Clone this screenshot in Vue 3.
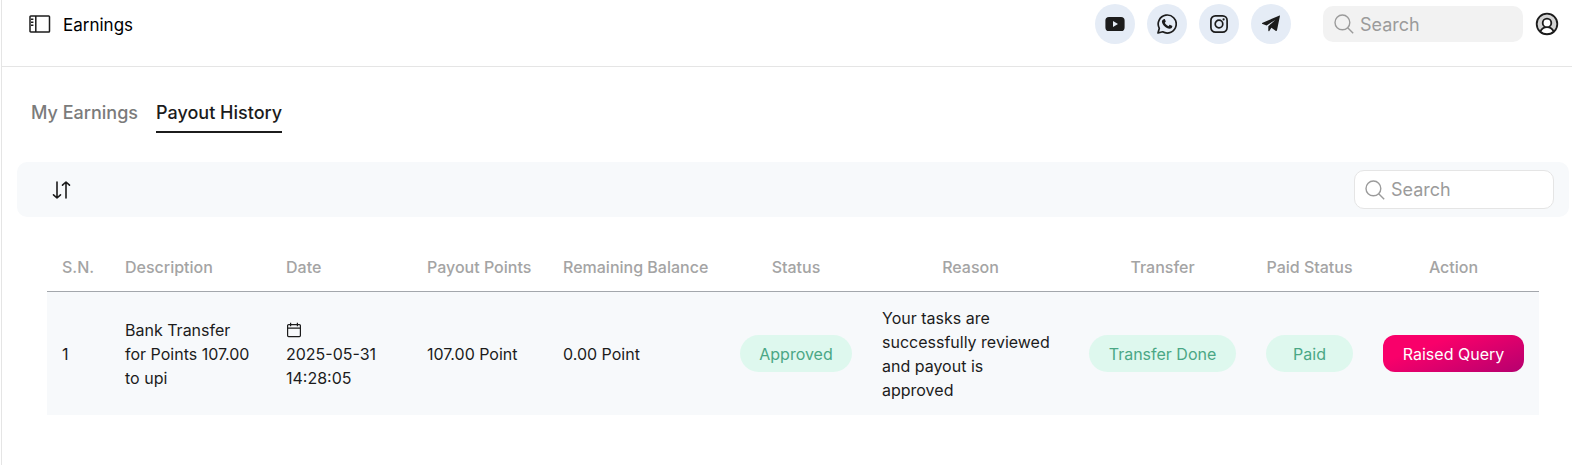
<script setup>
import { ref } from 'vue'

const tabs = ['My Earnings', 'Payout History']
const activeTab = ref('Payout History')

const columns = [
  { key: 'sn', label: 'S.N.' },
  { key: 'description', label: 'Description' },
  { key: 'date', label: 'Date' },
  { key: 'points', label: 'Payout Points' },
  { key: 'balance', label: 'Remaining Balance' },
  { key: 'status', label: 'Status', center: true },
  { key: 'reason', label: 'Reason', center: true },
  { key: 'transfer', label: 'Transfer', center: true },
  { key: 'paid', label: 'Paid Status', center: true },
  { key: 'action', label: 'Action', center: true },
]

const payouts = [
  {
    sn: 1,
    description: 'Bank Transfer for Points 107.00 to upi',
    date: '2025-05-31 14:28:05',
    points: '107.00 Point',
    balance: '0.00 Point',
    status: 'Approved',
    reason: 'Your tasks are successfully reviewed and payout is approved',
    transfer: 'Transfer Done',
    paid: 'Paid',
  },
]
</script>

<template>
  <div class="page">
    <header class="topbar">
      <button class="icon-button" type="button" aria-label="Toggle sidebar">
        <svg width="22" height="18" viewBox="0 0 22 18" fill="none" stroke="#1c1c1c" stroke-width="1.5">
          <rect x="1" y="1" width="19.5" height="16" rx="0.8" />
          <path d="M6.8 1v16M2 4.2h2.4M2 7.200h2.400M2 10.200h2.400" />
        </svg>
      </button>
      <h1 class="title">Earnings</h1>
      <nav class="socials" aria-label="Social links">
        <a class="social" href="#" aria-label="YouTube">
          <svg width="20" height="20" viewBox="0 0 20 20">
            <path fill="#1c1c1c" fill-rule="evenodd" d="M4 3h12q3.6 0 3.6 3.6v6.8q0 3.6-3.6 3.6H4q-3.600 0-3.600-3.600V6.600Q.4 3 4 3zm4 4v6l5-3z" />
          </svg>
        </a>
        <a class="social" href="#" aria-label="WhatsApp">
          <svg width="20" height="20" viewBox="0 0 20 20">
            <path fill="none" stroke="#1c1c1c" stroke-width="1.7" stroke-linejoin="round" d="M1 19l1.300-4.700A9 9 0 1 1 5.700 17.800z" />
            <path fill="#1c1c1c" d="M6.700 5.200c.4-.3 1-.3 1.200.1l.8 1.900c.1.300 0 .6-.2.8l-.7.800c.9 1.700 2.100 2.700 3.700 3.400l.9-1.100c.2-.3.5-.3.800-.2l1.800.9c.3.200.4.400.3.800-.2 1.400-1.400 2.200-2.700 2.200-3.500-.2-7.500-3.900-7.700-7.200 0-1 .7-1.900 1.800-2.400z" />
          </svg>
        </a>
        <a class="social" href="#" aria-label="Instagram">
          <svg width="20" height="20" viewBox="0 0 20 20" fill="none" stroke="#1c1c1c" stroke-width="1.700">
            <rect x="1.900" y="1.900" width="16.200" height="16.200" rx="4.500" />
            <circle cx="10" cy="10" r="3.800" />
            <circle cx="14.600" cy="5.400" r="1.100" fill="#1c1c1c" stroke="none" />
          </svg>
        </a>
        <a class="social" href="#" aria-label="Telegram">
          <svg width="20" height="20" viewBox="0 0 20 20">
            <path fill="#1c1c1c" d="M18.900 2.200 16 16.300c-.2.800-.8.900-1.400.5l-4.200-3.100-2.100 3.200c-.4.500-1 .3-1-.4v-4.300l6.900-6.300-8.600 5.500L1.600 10c-.9-.3-.9-.8.100-1.200L18 1.700c.7-.3 1 0 .9.500z" />
          </svg>
        </a>
      </nav>
      <label class="search">
        <svg width="20" height="20" viewBox="0 0 20 20" fill="none" stroke="#9b9b9b" stroke-width="1.400">
          <circle cx="8.400" cy="8.400" r="7.400" />
          <path d="m13.700 13.700 5.500 5.500" />
        </svg>
        <input type="search" placeholder="Search" aria-label="Search site" />
      </label>
      <button class="icon-button" type="button" aria-label="Account">
        <svg width="24" height="24" viewBox="0 0 24 24" fill="none" stroke="#1c1c1c" stroke-width="1.800">
          <circle cx="12" cy="12" r="10.300" fill="#d4d4d4" />
          <path fill="#fff" d="M5.300 19.600c1.300-2.800 3.700-4.400 6.700-4.400s5.400 1.600 6.700 4.400A10.300 10.300 0 0 1 5.300 19.600z" />
          <circle cx="12" cy="10.900" r="4.300" fill="#fff" />
        </svg>
      </button>
    </header>

    <main>
      <div class="tabs" role="tablist">
        <button
          v-for="tab in tabs"
          :key="tab"
          type="button"
          role="tab"
          class="tab"
          :class="{ active: tab === activeTab }"
          :aria-selected="tab === activeTab"
          @click="activeTab = tab"
        >{{ tab }}</button>
      </div>

      <div class="toolbar">
        <button class="icon-button" type="button" aria-label="Sort">
          <svg width="20" height="20" viewBox="0 0 20 20" fill="none" stroke="#1c1c1c" stroke-width="1.600" stroke-linecap="round" stroke-linejoin="round">
            <path d="M6 2v16M2.500 14.800 6 18l3.500-3.200M15 18V2M11.500 5.200 15 2l3.500 3.200" />
          </svg>
        </button>
        <label class="search boxed">
          <svg width="20" height="20" viewBox="0 0 20 20" fill="none" stroke="#9b9b9b" stroke-width="1.400">
            <circle cx="8.400" cy="8.400" r="7.400" />
            <path d="m13.700 13.700 5.500 5.500" />
          </svg>
          <input type="search" placeholder="Search" aria-label="Search payouts" />
        </label>
      </div>

      <div class="table-wrap">
        <table>
          <colgroup>
            <col v-for="c in columns" :key="c.key" :class="'col-' + c.key" />
          </colgroup>
          <thead>
            <tr>
              <th v-for="c in columns" :key="c.key" scope="col" :class="{ center: c.center }">{{ c.label }}</th>
            </tr>
          </thead>
          <tbody>
            <tr v-for="p in payouts" :key="p.sn">
              <td>{{ p.sn }}</td>
              <td class="description">{{ p.description }}</td>
              <td>
                <svg class="calendar" width="16" height="16" viewBox="0 0 16 16" fill="none" stroke="#1c1c1c" stroke-width="1.200">
                  <rect x="1.600" y="2.600" width="12.800" height="12" rx="1" />
                  <path d="M1.600 6.200h12.800M4.600.8v3.400M11.400.8v3.400" />
                </svg>
                {{ p.date }}
              </td>
              <td>{{ p.points }}</td>
              <td>{{ p.balance }}</td>
              <td class="center"><span class="pill">{{ p.status }}</span></td>
              <td>{{ p.reason }}</td>
              <td class="center"><span class="pill">{{ p.transfer }}</span></td>
              <td class="center"><span class="pill">{{ p.paid }}</span></td>
              <td class="center"><button class="query" type="button">Raised Query</button></td>
            </tr>
          </tbody>
        </table>
      </div>
    </main>
  </div>
</template>

<style>
body {
  background: #fff;
}
</style>

<style scoped>
.page {
  box-sizing: border-box;
  min-height: 100vh;
  margin-left: 1px;
  border-left: 1px solid #e5e5e5;
  font-family: Inter, "Liberation Sans", sans-serif;
  font-size: 16px;
  line-height: 24px;
  color: #1c1c1c;
}
button,
input {
  font: inherit;
  color: inherit;
}
svg {
  display: block;
}
.icon-button {
  padding: 0;
  border: 0;
  background: none;
  cursor: pointer;
}
.topbar {
  display: flex;
  align-items: center;
  padding: 4px 13px 22px 27px;
  border-bottom: 1px solid #e5e5e5;
}
.title {
  margin: 0 auto 0 12px;
  padding-top: 2px;
  font-size: 17px;
  font-weight: 400;
  color: #000;
}
.socials {
  display: flex;
  gap: 12px;
  margin-right: 32px;
}
.social {
  display: flex;
  align-items: center;
  justify-content: center;
  width: 40px;
  height: 40px;
  border-radius: 50%;
  background: #e5ecf6;
}
.search {
  box-sizing: border-box;
  display: flex;
  align-items: center;
  gap: 6px;
  width: 200px;
  height: 36px;
  margin-right: 12px;
  padding: 0 11px;
  border-radius: 10px;
  background: #f2f2f2;
}
.search svg {
  flex: none;
}
.search input {
  min-width: 0;
  width: 100%;
  padding: 2px 0 0;
  border: 0;
  outline: 0;
  background: none;
  font-size: 18px;
}
.search input::placeholder {
  color: #9b9b9b;
  opacity: 1;
}
.search.boxed {
  height: 39px;
  margin: 0;
  padding: 0 10px;
  border: 1px solid #e5e5e5;
  background: #fff;
}
.search.boxed input {
  padding: 0;
}
.tabs {
  display: flex;
  gap: 17px;
  padding: 32px 28px 29px;
}
.tab {
  padding: 2px 1px 6px;
  border: 0;
  border-bottom: 2px solid transparent;
  background: none;
  font-size: 18px;
  font-weight: 500;
  color: #7b7b7b;
  cursor: pointer;
}
.tab.active {
  padding: 2px 0 6px;
  border-bottom-color: #1c1c1c;
  color: #1c1c1c;
}
.toolbar {
  display: flex;
  align-items: center;
  justify-content: space-between;
  margin: 0 3px 0 15px;
  padding: 8px 15px 8px 34px;
  border-radius: 10px;
  background: #f7f9fb;
}
.table-wrap {
  padding: 30px 33px 0 45px;
}
table {
  width: 100%;
  table-layout: fixed;
  border-collapse: separate;
  border-spacing: 0;
}
.col-sn { width: 63px; }
.col-description { width: 161px; }
.col-date { width: 141px; }
.col-points { width: 136px; }
.col-balance { width: 177px; }
.col-status { width: 142px; }
.col-reason { width: 207px; }
.col-transfer { width: 177px; }
.col-paid { width: 117px; }
.col-action { width: 171px; }
th {
  padding: 8px 15px 12px;
  border-bottom: 1px solid #a3a7ac;
  font-weight: 500;
  text-align: left;
  white-space: nowrap;
  color: #a4a4a4;
}
td {
  padding: 14px 15px 13px;
  background: #f7f9fb;
  vertical-align: middle;
}
td.description {
  padding-right: 20px;
}
th.center,
td.center {
  text-align: center;
}
td.center {
  padding: 13px 15px 14px;
  white-space: nowrap;
}
.calendar {
  margin: 4px 0;
}
.pill,
.query {
  box-sizing: border-box;
  display: block;
  width: 100%;
  padding: 7px 0 6px;
  text-align: center;
}
.pill {
  border-radius: 19px;
  background: #def8ee;
  color: #4aa785;
}
.query {
  border: 0;
  border-radius: 12px;
  background: linear-gradient(160deg, #f9006a 30%, #b5006f);
  color: #fff;
  cursor: pointer;
}
</style>
